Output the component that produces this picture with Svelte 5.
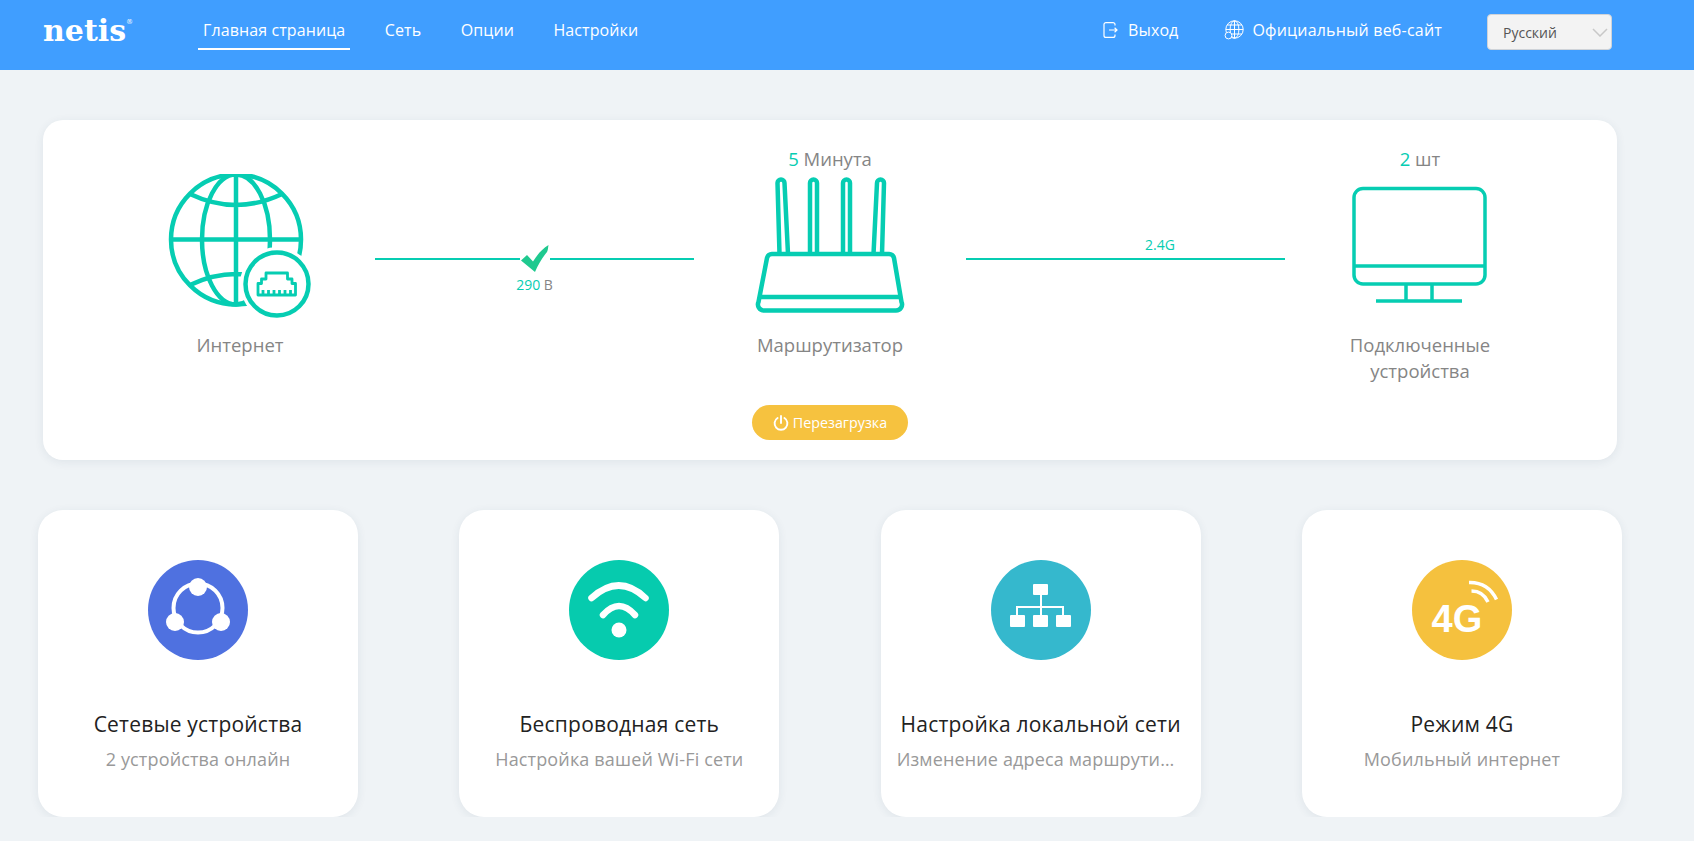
<script>
	const navItems = ['Главная страница', 'Сеть', 'Опции', 'Настройки'];
	let language = $state('ru');

	const tiles = [
		{ id: 'devices', color: '#4f71e0', title: 'Сетевые устройства', sub: '2 устройства онлайн' },
		{ id: 'wifi', color: '#06cbae', title: 'Беспроводная сеть', sub: 'Настройка вашей Wi-Fi сети' },
		{ id: 'lan', color: '#35b8cd', title: 'Настройка локальной сети', sub: 'Изменение адреса маршрутизатора' },
		{ id: '4g', color: '#f5c13e', title: 'Режим 4G', sub: 'Мобильный интернет' }
	];
</script>

<header class="topbar">
	<div class="logo">netis<sup>®</sup></div>
	<nav class="nav">
		{#each navItems as item, i}
			<a href="#top" class:active={i === 0}>{item}</a>
		{/each}
	</nav>
	<div class="top-right">
		<a class="top-link exit" href="#top">
			<svg width="15" height="16" viewBox="0 0 15 16" fill="none" stroke="#fff" stroke-width="1.2">
				<path d="M12 3.5V2.6A2 2 0 0 0 10 .6H3A2 2 0 0 0 1 2.6v10.8a2 2 0 0 0 2 2h7a2 2 0 0 0 2-2v-.9" />
				<path d="M6 8h8M11.6 5.8 14 8l-2.4 2.2" />
			</svg>
			Выход
		</a>
		<a class="top-link site" href="#top">
			<svg width="20" height="20" viewBox="0 0 20 20" fill="none" stroke="#fff" stroke-width="1">
				<circle cx="10.5" cy="9.5" r="8.7" />
				<ellipse cx="10.5" cy="9.5" rx="4.4" ry="8.7" />
				<path d="M10.5.8v17.4M1.8 9.5h17.4M3.2 5h14.6M3.2 14h14.6" />
				<circle cx="4.5" cy="15.5" r="3.4" fill="#409eff" />
			</svg>
			Официальный веб-сайт
		</a>
		<div class="lang">
			<select bind:value={language}>
				<option value="ru">Русский</option>
				<option value="en">English</option>
			</select>
			<svg class="chevron" width="16" height="9" viewBox="0 0 16 9" fill="none" stroke="#c8c8c8" stroke-width="1.5">
				<path d="M1 1l7 7 7-7" />
			</svg>
		</div>
	</div>
</header>

<main class="page">
	<section class="status">
		<div class="status-row">
			<div class="node">
				<div class="node-top"></div>
				<svg class="node-icon" viewBox="140 174 200 158" fill="none" stroke="#06cdb2" stroke-width="4.5">
					<circle cx="236" cy="239.5" r="65" />
					<ellipse cx="236" cy="239.5" rx="34" ry="65" />
					<path d="M236 174.500v130M171 239.500h130M190 194q46 22 92 0M190 285q46-22 92 0" />
					<circle cx="277" cy="284" r="37" fill="#fff" stroke="none" />
					<circle cx="277" cy="284" r="31.500" fill="#fff" />
					<path
						stroke-width="2.800"
						stroke-linejoin="round"
						d="M258 295v-11.500h3.500v-4.500h4.500v-6h21.500v6h4.500v4.500h3.500V295zM263 295v-5M268.500 295v-5M274 295v-5M279.500 295v-5M285 295v-5M290.500 295v-5"
					/>
				</svg>
				<div class="node-label">Интернет</div>
			</div>

			<div class="link wan">
				<div class="link-row">
					<span class="line"></span>
					<svg width="28" height="28" viewBox="0 0 28 28">
						<path fill="#1fc98f" d="M0 15.500 6 10l6 6.500C16 10 21 4 27.500 0c-.5 3-.5 5-1.500 7-5 6-9 13-12 20z" />
					</svg>
					<span class="line"></span>
				</div>
				<div class="link-text"><b>290</b> В</div>
			</div>

			<div class="node">
				<div class="node-top"><b>5</b> Минута</div>
				<svg class="node-icon" viewBox="730 174 200 158" fill="none" stroke="#06cdb2" stroke-width="4.5">
					<path
						stroke-linejoin="round"
						d="M779.500 254 777.500 183a3.500 3.500 0 0 1 7 0L788 254M810 254V183a3.500 3.500 0 0 1 7 0v71M843 254V183a3.500 3.500 0 0 1 7 0v71M873.500 254 877 183a3.500 3.500 0 0 1 7 0L882 254"
					/>
					<path
						stroke-linejoin="round"
						d="M772 254h117a5 5 0 0 1 5 4l7.500 44a6 6 0 0 1-5.500 8.500H764a6 6 0 0 1-5.500-8.500L767 258a5 5 0 0 1 5-4zM761 297h139"
					/>
				</svg>
				<div class="node-label">Маршрутизатор</div>
			</div>

			<div class="link lan-link">
				<div class="link-text"><b>2.4G</b></div>
				<span class="line"></span>
			</div>

			<div class="node">
				<div class="node-top"><b>2</b> шт</div>
				<svg class="node-icon" viewBox="1320 174 200 158" fill="none" stroke="#06cdb2" stroke-width="3.500">
					<rect x="1354" y="188.500" width="131" height="95.500" rx="9" />
					<path d="M1354 266h131M1406 284v17M1432 284v17M1376 301h86" />
				</svg>
				<div class="node-label">Подключенные<br />устройства</div>
			</div>
		</div>
		<button class="reboot">
			<svg width="16" height="16" viewBox="0 0 15 15" fill="none" stroke="#fff" stroke-width="1.800" stroke-linecap="round">
				<path d="M7.500 1v6.500M4.300 2.800a6 6 0 1 0 6.400 0" />
			</svg>
			Перезагрузка
		</button>
	</section>

	<section class="tiles">
		{#each tiles as tile}
			<a class="tile" href="#top">
				<svg class="tile-icon" width="100" height="100" viewBox="0 0 100 100">
					<circle cx="50" cy="50" r="50" fill={tile.color} />
					{#if tile.id === 'devices'}
						<circle cx="50" cy="48" r="24.500" fill="none" stroke="#fff" stroke-width="4" />
						<circle cx="50" cy="27" r="9" fill="#fff" />
						<circle cx="27" cy="62" r="9" fill="#fff" />
						<circle cx="73" cy="62" r="9" fill="#fff" />
					{:else if tile.id === 'wifi'}
						<path d="M22.500 38Q50 13 76.500 38M34 55Q50 37 66 55" fill="none" stroke="#fff" stroke-width="6.500" stroke-linecap="round" />
						<circle cx="50" cy="70" r="7.500" fill="#fff" />
					{:else if tile.id === 'lan'}
						<path d="M50 30v17M26 60V47h46v13M50 47v13" fill="none" stroke="#fff" stroke-width="2" />
						<rect x="42" y="24" width="15" height="11" rx="1" fill="#fff" />
						<rect x="19" y="55" width="15" height="12" rx="1" fill="#fff" />
						<rect x="42" y="55" width="15" height="12" rx="1" fill="#fff" />
						<rect x="65" y="55" width="15" height="12" rx="1" fill="#fff" />
					{:else}
						<text x="19.500" y="72" class="four-g">4G</text>
						<path d="M57 22.500Q76 22 84.500 39.500M59.500 31Q71 31 76 42" fill="none" stroke="#fff" stroke-width="3.500" />
					{/if}
				</svg>
				<div class="tile-title">{tile.title}</div>
				<div class="tile-sub" class:narrow={tile.id === 'lan'}>{tile.sub}</div>
			</a>
		{/each}
	</section>
</main>

<style>
	:global(body) {
		background: #eff3f6;
		font-family: 'Open Sans', 'Noto Sans', sans-serif;
	}

	a {
		color: inherit;
		text-decoration: none;
	}

	.topbar {
		display: flex;
		align-items: center;
		height: 70px;
		padding: 0 82px 0 43px;
		background: #409eff;
		color: #fff;
		box-sizing: border-box;
	}

	.logo {
		width: 85px;
		margin-right: 70px;
		font-family: 'DejaVu Serif', serif;
		font-size: 30px;
		font-weight: 700;
		line-height: 30px;
		margin-bottom: 9px;
		white-space: nowrap;
	}

	.logo sup {
		font-size: 7px;
		font-weight: 400;
		vertical-align: 17px;
		line-height: 0;
	}

	.nav {
		display: flex;
		gap: 29.5px;
		margin-bottom: 10px;
	}

	.nav a {
		height: 40px;
		padding: 0 5px;
		box-sizing: border-box;
		font-size: 16px;
		letter-spacing: 0.1px;
		line-height: 40px;
		border-bottom: 2px solid transparent;
	}

	.nav a.active {
		border-bottom-color: #fff;
	}

	.top-right {
		display: flex;
		align-items: center;
		margin-left: auto;
		margin-bottom: 6px;
	}

	.top-link {
		display: flex;
		align-items: center;
		margin-bottom: 4px;
		font-size: 16px;
		letter-spacing: 0.1px;
		white-space: nowrap;
	}

	.exit {
		gap: 10px;
		margin-right: 46px;
	}

	.site {
		gap: 8px;
		margin-right: 45px;
		letter-spacing: 0.2px;
	}

	.lang {
		position: relative;
		width: 125px;
		height: 36px;
	}

	.lang select {
		width: 100%;
		height: 100%;
		padding: 0 0 0 15px;
		appearance: none;
		background: #f3f3f3;
		border: 1px solid #cfd3d8;
		border-radius: 4px;
		color: #555;
		font-family: inherit;
		font-size: 14px;
	}

	.chevron {
		position: absolute;
		top: 14px;
		right: 4px;
		pointer-events: none;
	}

	.page {
		padding-top: 50px;
	}

	.status {
		display: flex;
		flex-direction: column;
		align-items: center;
		height: 340px;
		margin: 0 77px 0 43px;
		padding-top: 27px;
		box-sizing: border-box;
		background: #fff;
		border-radius: 20px;
		box-shadow: 0 2px 10px rgba(40, 60, 90, 0.08);
	}

	.status-row {
		display: flex;
		align-items: flex-start;
		justify-content: center;
		gap: 35.5px;
		height: 258px;
	}

	.node {
		width: 200px;
		text-align: center;
		color: #858585;
		font-size: 18.5px;
		line-height: 26px;
	}

	.node-top {
		height: 27px;
		line-height: 23px;
	}

	.node-top b,
	.link-text b {
		color: #06cdb2;
		font-weight: 400;
	}

	.node-icon {
		display: block;
		width: 200px;
		height: 158px;
	}

	.link {
		width: 319px;
		text-align: center;
	}

	.wan {
		margin: 98px 0.5px 0 -0.5px;
	}

	.lan-link {
		margin-top: 90px;
	}

	.link-row {
		display: flex;
		align-items: center;
		gap: 1px;
		height: 28px;
	}

	.line {
		display: block;
		flex: 1;
		height: 2px;
		background: #06cdb2;
	}

	.link-text {
		color: #858585;
		font-size: 14px;
		line-height: 16px;
	}

	.wan .link-text {
		margin-top: 4px;
	}

	.lan-link .link-text {
		margin-bottom: 5px;
		padding-left: 70px;
	}

	.reboot {
		display: flex;
		align-items: center;
		justify-content: center;
		gap: 4px;
		width: 156px;
		height: 35px;
		padding: 0;
		background: #f6c23f;
		border: none;
		border-radius: 18px;
		color: #fff;
		font-family: inherit;
		font-size: 14.3px;
	}

	.tiles {
		display: flex;
		justify-content: space-between;
		margin-top: 50px;
		padding: 0 72px 0 38px;
	}

	.tile {
		display: block;
		width: 320px;
		height: 307px;
		padding: 50px 16px 0;
		box-sizing: border-box;
		background: #fff;
		border-radius: 25px;
		box-shadow: 0 2px 10px rgba(40, 60, 90, 0.08);
		text-align: center;
	}

	.tile-icon {
		display: block;
		margin: 0 auto;
	}

	.four-g {
		fill: #fff;
		font-family: 'Liberation Sans', sans-serif;
		font-size: 38px;
		font-weight: 700;
	}

	.tile-title {
		margin-top: 50px;
		color: #222;
		font-size: 21px;
		letter-spacing: 0.2px;
		line-height: 28px;
		white-space: nowrap;
	}

	.tile-sub {
		margin-top: 7px;
		overflow: hidden;
		color: #999;
		font-size: 18px;
		letter-spacing: 0.15px;
		line-height: 28px;
		white-space: nowrap;
		text-overflow: ellipsis;
	}

	.tile-sub.narrow {
		padding-right: 8px;
	}
</style>
